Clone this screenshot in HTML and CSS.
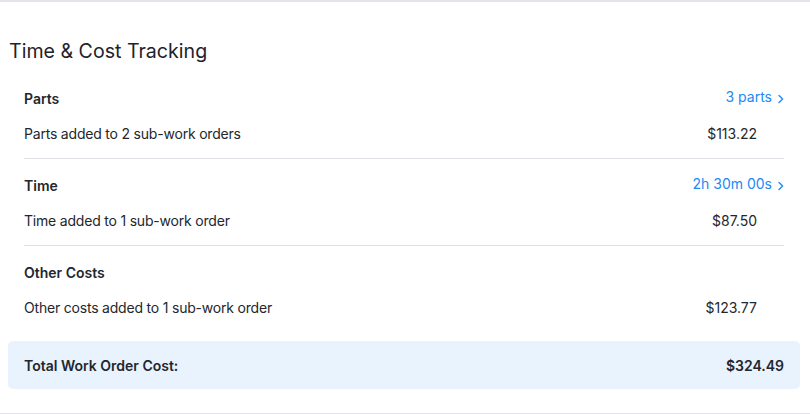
FILE: index.html
```html
<!DOCTYPE html>
<html lang="en">
<head>
<meta charset="utf-8">
<title>Time &amp; Cost Tracking</title>
<link rel="stylesheet" href="styles.css">
</head>
<body>
<main class="panel">
  <h2 class="panel-title">Time &amp; Cost Tracking</h2>

  <section class="cost-group">
    <div class="group-head">
      <span class="group-name">Parts</span>
      <a class="group-link" href="#">3 parts<svg class="chev" viewBox="0 0 6 10" aria-hidden="true"><path d="M1 1.5 L4.6 5 L1 8.5"/></svg></a>
    </div>
    <div class="group-row">
      <span class="desc">Parts added to 2 sub-work orders</span>
      <span class="amount">$113.22</span>
    </div>
  </section>

  <section class="cost-group">
    <div class="group-head">
      <span class="group-name">Time</span>
      <a class="group-link" href="#">2h 30m 00s<svg class="chev" viewBox="0 0 6 10" aria-hidden="true"><path d="M1 1.5 L4.6 5 L1 8.5"/></svg></a>
    </div>
    <div class="group-row">
      <span class="desc">Time added to 1 sub-work order</span>
      <span class="amount">$87.50</span>
    </div>
  </section>

  <section class="cost-group">
    <div class="group-head">
      <span class="group-name">Other Costs</span>
    </div>
    <div class="group-row">
      <span class="desc">Other costs added to 1 sub-work order</span>
      <span class="amount">$123.77</span>
    </div>
  </section>

  <div class="total">
    <span>Total Work Order Cost:</span>
    <span>$324.49</span>
  </div>
</main>
</body>
</html>
```
FILE: styles.css
```css
* {
  box-sizing: border-box;
}

html, body {
  margin: 0;
  background: #ffffff;
}

body {
  font-family: Inter, "Noto Sans", "Liberation Sans", sans-serif;
  color: #23272d;
  font-size: 14px;
}

.panel {
  border-top: 2px solid #e2e6ea;
  border-bottom: 1px solid #e2e6ea;
  padding: 0 10px 24px 8px;
}

.panel-title {
  margin: 35px 0 7px 1px;
  font-size: 19.6px;
  line-height: 28px;
  font-weight: 400;
  color: #1f2329;
}

.cost-group {
  margin: 0 16px;
  padding: 14px 0 13px;
  border-bottom: 1px solid #dcdfe3;
}

.cost-group:last-of-type {
  border-bottom: none;
}

.group-head,
.group-row {
  display: flex;
  align-items: center;
  justify-content: space-between;
  height: 24px;
}

.group-head {
  margin-bottom: 11px;
}

.group-name {
  font-weight: 600;
}

.desc {
  letter-spacing: -0.2px;
}

.group-link {
  display: inline-flex;
  align-items: center;
  gap: 6px;
  color: #2289f6;
  text-decoration: none;
  margin-top: -3px;
}

.chev {
  width: 6px;
  height: 10px;
  margin-top: 4px;
  fill: none;
  stroke: #2289f6;
  stroke-width: 1.4;
  stroke-linecap: round;
  stroke-linejoin: round;
}

.amount {
  margin-right: 27px;
}

.total {
  display: flex;
  justify-content: space-between;
  align-items: center;
  height: 48px;
  margin-top: 9px;
  padding: 0 16px;
  background: #e8f3fe;
  border-radius: 5px;
  font-weight: 600;
}
```
